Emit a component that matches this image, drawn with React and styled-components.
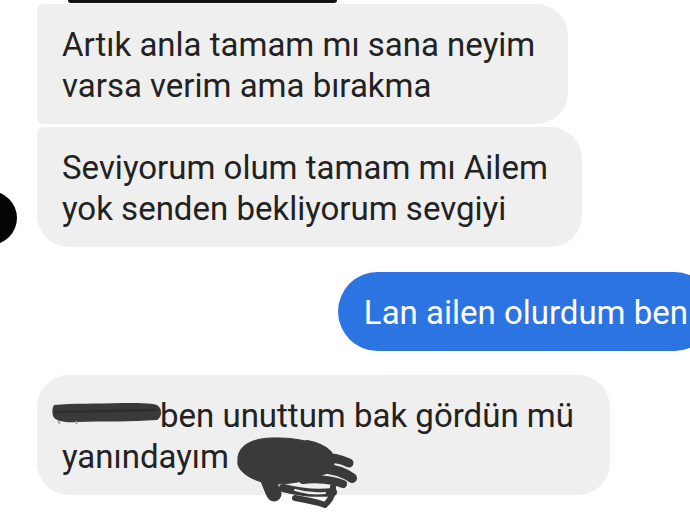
import React from 'react'
import styled, {createGlobalStyle} from 'styled-components'

const GlobalStyle = createGlobalStyle`
    html, body {
        margin: 0;
        padding: 0;
        background: #ffffff;
        overflow: hidden;
    }
    body {
        font-family: Roboto, "Noto Sans", sans-serif;
    }
`

const Page = styled.div`
    width: 690px;
    height: 520px;
    overflow: hidden;
    position: relative;
`

const TopEdge = styled.div`
    margin-left: 68px;
    width: 269px;
    height: 3px;
    background: #111;
    border-radius: 0 0 3px 3px;
`

const Thread = styled.div`
    width: 714px;
    display: flex;
    flex-direction: column;
    padding-top: 1px;
`

const Row = styled.div`
    display: grid;
    grid-template-columns: 37px auto;
    align-items: end;
    margin-top: ${p => p.$gap || 0}px;
`

const SentRow = styled.div`
    display: flex;
    justify-content: flex-end;
    margin-top: ${p => p.$gap || 0}px;
`

const AvatarSlot = styled.div`
    display: flex;
    justify-content: flex-end;
    padding-right: 20px;
    padding-bottom: 2px;
`

const Avatar = styled.div`
    flex: none;
    width: 54px;
    height: 54px;
    border-radius: 50%;
    background: #050505;
`

const radii = {
    middle: '6px 32px 32px 6px',
    last: '6px 32px 32px 32px',
    single: '32px',
}

const Bubble = styled.div`
    box-sizing: border-box;
    width: ${p => p.$width}px;
    padding: 20px 20px 18px 25px;
    background: #efefef;
    color: #222222;
    font-size: 33px;
    line-height: 41px;
    border-radius: ${p => radii[p.$shape]};
    white-space: nowrap;
`

const SentBubble = styled.div`
    padding: 20px 26px 18px 26px;
    background: #2d74e3;
    color: #ffffff;
    font-size: 33px;
    line-height: 41px;
    border-radius: 40px;
    white-space: nowrap;
`

const Redacted = styled.span`
    position: relative;
    display: inline-block;
    width: 98px;
    height: 20px;
`

const Scribble = styled.svg`
    position: absolute;
    overflow: visible;
`

const NameScribble = () => (
    <Scribble width="110" height="22" viewBox="0 0 110 22" style={{left: -10, top: -4}}>
        <path
            d="M2 2 C20 0 45 1 70 0 C86 0 98 0 105 2 C111 6 110 14 105 17 C80 19 50 18 25 19 C12 20 3 18 1 13 C0 9 0 5 2 2 Z"
            fill="#3a3a3a"
        />
        <path d="M6 18 L8 21 M24 18 L25 21" stroke="#9a9a9a" strokeWidth="1.5" />
        <path d="M3 9 L104 7" stroke="#2e2e2e" strokeWidth="2.5" strokeLinecap="round" />
    </Scribble>
)

const BlobSlot = styled.span`
    position: relative;
    display: inline-block;
    width: 100px;
    height: 20px;
`

const BlobScribble = () => (
    <Scribble width="120" height="70" viewBox="0 0 120 70" style={{left: 0, top: -11}}>
        <g fill="#3a3a3a" stroke="#3a3a3a" strokeLinecap="round" strokeLinejoin="round">
            <path d="M1 20 C3 6 20 0 42 1 C62 1 80 6 93 14 C101 21 98 32 88 37 C72 44 52 47 40 47 C22 47 4 38 1 28 Z" />
            <path d="M30 40 C33 48 35 53 37 57" strokeWidth="15" fill="none" />
            <path d="M80 20 C92 20 104 22 112 26" strokeWidth="9" fill="none" />
            <path d="M84 31 C96 32 108 36 115 41" strokeWidth="10" fill="none" />
            <path d="M66 43 C80 41 96 43 106 47" strokeWidth="8" fill="none" />
            <path d="M46 51 C62 55 80 57 96 55" strokeWidth="8" fill="none" />
            <path d="M58 61 C70 63 80 65 88 68" strokeWidth="6" fill="none" />
            <path d="M96 50 C96 56 94 62 90 66" strokeWidth="6" fill="none" />
            <path d="M70 6 C80 8 88 12 92 16" strokeWidth="6" fill="none" />
        </g>
        <path d="M58 53 C68 56 78 57 88 56" stroke="#efefef" strokeWidth="2" fill="none" strokeLinecap="round" />
    </Scribble>
)

export default function App() {
    return (
        <Page>
            <GlobalStyle />
            <TopEdge />
            <Thread>
                <Row>
                    <div />
                    <Bubble $shape="middle" $width={531}>
                        Artık anla tamam mı sana neyim<br />
                        varsa verim ama bırakma
                    </Bubble>
                </Row>
                <Row $gap={3}>
                    <AvatarSlot>
                        <Avatar />
                    </AvatarSlot>
                    <Bubble $shape="last" $width={545}>
                        Seviyorum olum tamam mı Ailem<br />
                        yok senden bekliyorum sevgiyi
                    </Bubble>
                </Row>
                <SentRow $gap={25}>
                    <SentBubble>Lan ailen olurdum ben</SentBubble>
                </SentRow>
                <Row $gap={24}>
                    <div />
                    <Bubble $shape="single" $width={573}>
                        <Redacted><NameScribble /></Redacted>ben unuttum bak gördün mü<br />
                        yanındayım <BlobSlot><BlobScribble /></BlobSlot>
                    </Bubble>
                </Row>
            </Thread>
        </Page>
    )
}
